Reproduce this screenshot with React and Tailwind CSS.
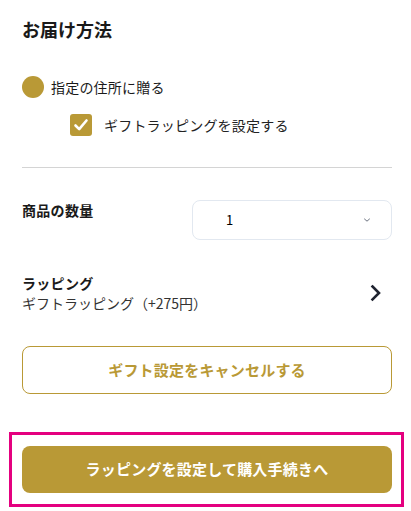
import React from "react";

export default function App() {
  return (
    <div className="w-[411px] min-h-[511px] bg-white pl-[22px] pr-[19px] text-[#1a1a1a]" style={{ fontFamily: '"Noto Sans CJK JP", "Noto Sans", sans-serif' }}>
      <h2 className="pt-[16px] text-[18px] leading-[26px] font-bold">お届け方法</h2>

      <div className="mt-[34px] flex items-center gap-[7px]">
        <span className="w-[22px] h-[22px] rounded-full bg-[#b99936] shrink-0" />
        <span className="text-[14px] leading-[22px] tracking-[0.2px]">指定の住所に贈る</span>
      </div>

      <div className="mt-[16px] ml-[48px] flex items-center gap-[12px]">
        <span className="w-[22px] h-[22px] rounded-[3px] bg-[#b99936] flex items-center justify-center shrink-0">
          <svg width="16" height="16" viewBox="0 0 16 16" fill="none">
            <path d="M2.5 8.5 L6.2 12.2 L13.5 3.5" stroke="white" strokeWidth="2.6" strokeLinecap="round" strokeLinejoin="round" />
          </svg>
        </span>
        <span className="text-[14px] leading-[22px] tracking-[0.2px] text-[#222]">ギフトラッピングを設定する</span>
      </div>

      <div className="mt-[31px] h-px bg-[#d4d4d4]" />

      <div className="mt-[32px] flex items-start justify-between">
        <span className="text-[14px] leading-[20px] font-bold tracking-[0.3px]">商品の数量</span>
        <div className="w-[200px] h-[40px] rounded-[8px] border border-[#e2e8f0] flex items-center justify-between pl-[33px] pr-[20px]">
          <span className="text-[13px] text-black">1</span>
          <svg width="8" height="6" viewBox="0 0 8 6" fill="none">
            <path d="M1.5 2 L4 4.2 L6.5 2" stroke="#6b7280" strokeWidth="1" strokeLinecap="round" strokeLinejoin="round" />
          </svg>
        </div>
      </div>

      <div className="mt-[33px] flex items-center justify-between">
        <div className="flex flex-col">
          <span className="text-[14px] leading-[20px] font-bold tracking-[0.3px]">ラッピング</span>
          <span className="text-[14px] leading-[20px] text-[#333]">ギフトラッピング（+275円）</span>
        </div>
        <svg width="16" height="18" viewBox="0 0 16 18" fill="none" className="mr-[8px]">
          <path d="M4.5 2.5 L11 9 L4.5 15.5" stroke="#1f2330" strokeWidth="2.6" strokeLinecap="square" strokeLinejoin="miter" />
        </svg>
      </div>

      <button className="mt-[33px] w-full h-[48px] rounded-[8px] border border-[#b99936] bg-white text-[15px] font-bold tracking-[0.2px] text-[#b99936]">
        ギフト設定をキャンセルする
      </button>

      <div className="mt-[38px] ml-[-13px] mr-[-12px] border-[3px] border-[#e4007f] pl-[10px] pr-[9px] py-[11px]">
        <button className="w-full h-[47px] rounded-[8px] bg-[#b99936] text-[15px] font-bold tracking-[0.2px] text-white">
          ラッピングを設定して購入手続きへ
        </button>
      </div>
    </div>
  );
}
